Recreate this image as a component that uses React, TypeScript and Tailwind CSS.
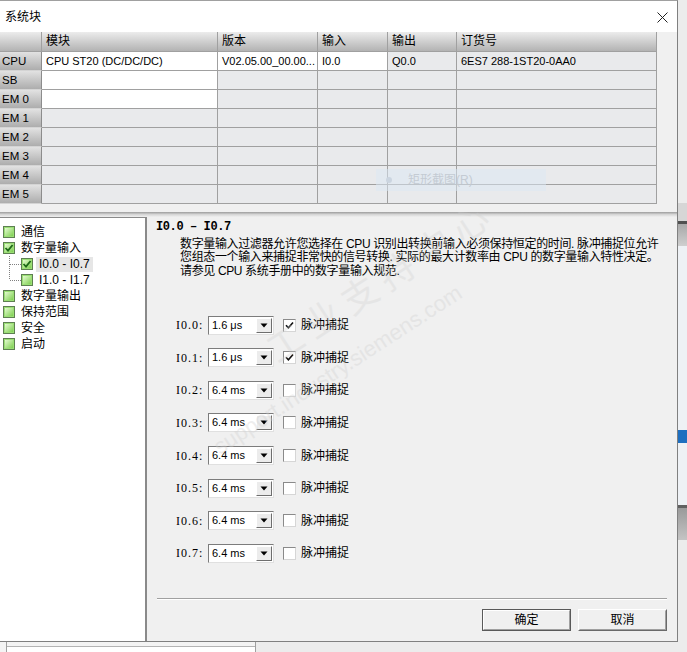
import React from "react";

const SANS = "font-['Liberation_Sans','Noto_Sans_CJK_SC',sans-serif]";

type Row = { h: string; cells: string[]; white: boolean[] };

const rows: Row[] = [
  { h: "CPU", cells: ["CPU ST20 (DC/DC/DC)", "V02.05.00_00.00...", "I0.0", "Q0.0", "6ES7 288-1ST20-0AA0"], white: [true, true, true, false, false] },
  { h: "SB", cells: ["", "", "", "", ""], white: [true, false, false, false, false] },
  { h: "EM 0", cells: ["", "", "", "", ""], white: [true, false, false, false, false] },
  { h: "EM 1", cells: ["", "", "", "", ""], white: [false, false, false, false, false] },
  { h: "EM 2", cells: ["", "", "", "", ""], white: [false, false, false, false, false] },
  { h: "EM 3", cells: ["", "", "", "", ""], white: [false, false, false, false, false] },
  { h: "EM 4", cells: ["", "", "", "", ""], white: [false, false, false, false, false] },
  { h: "EM 5", cells: ["", "", "", "", ""], white: [false, false, false, false, false] },
];

const headers = ["模块", "版本", "输入", "输出", "订货号"];

function TreeIcon({ checked }: { checked?: boolean }) {
  return (
    <svg width="12" height="12" viewBox="0 0 12 12" className="shrink-0">
      <defs>
        <linearGradient id="tg" x1="0" y1="0" x2="1" y2="1">
          <stop offset="0" stopColor="#e4fbd0" />
          <stop offset="1" stopColor="#7fcf52" />
        </linearGradient>
      </defs>
      <rect x="0.5" y="0.5" width="11" height="11" fill="#9adf74" stroke="#5e7f52" />
      <rect x="2" y="2" width="8" height="8" fill="url(#tg)" />
      {checked && (
        <path d="M2.5 6 L5 8.6 L9.6 3" fill="none" stroke="#1d6a17" strokeWidth="1.8" />
      )}
    </svg>
  );
}

function Connector({ last }: { last?: boolean }) {
  return (
    <svg width="21" height="16" viewBox="0 0 21 16" className="shrink-0">
      <line x1="9.5" y1="0" x2="9.5" y2={last ? 8 : 16} stroke="#808080" strokeDasharray="1 1" />
      <line x1="10" y1="8.5" x2="21" y2="8.5" stroke="#808080" strokeDasharray="1 1" />
    </svg>
  );
}

function CheckBox({ checked }: { checked?: boolean }) {
  return (
    <div className="w-[13px] h-[13px] bg-white border border-t-[#8a8a8a] border-l-[#8a8a8a] border-r-[#d6d6d6] border-b-[#d6d6d6] flex items-center justify-center shrink-0">
      {checked && (
        <svg width="9" height="9" viewBox="0 0 9 9">
          <path d="M1 4.2 L3.4 6.8 L8 1.5" fill="none" stroke="#111" strokeWidth="1.6" />
        </svg>
      )}
    </div>
  );
}

function Combo({ value }: { value: string }) {
  return (
    <div className="w-[66px] h-[19px] bg-white border border-t-[#7c7c7c] border-l-[#7c7c7c] border-r-[#e0e0e0] border-b-[#e0e0e0] flex items-center shrink-0">
      <span className={`flex-1 pl-[3px] text-[11px] text-black leading-none ${SANS}`}>{value}</span>
      <div className="w-[16px] h-[15px] mr-[1px] bg-[#ececec] border border-t-white border-l-white border-r-[#6e6e6e] border-b-[#6e6e6e] flex items-center justify-center">
        <svg width="8" height="5" viewBox="0 0 8 5">
          <path d="M0.5 0.5 L7.5 0.5 L4 4.5 Z" fill="#000" />
        </svg>
      </div>
    </div>
  );
}

const ioRows = [
  { l: "I0.0:", v: "1.6 μs", c: true },
  { l: "I0.1:", v: "1.6 μs", c: true },
  { l: "I0.2:", v: "6.4 ms", c: false },
  { l: "I0.3:", v: "6.4 ms", c: false },
  { l: "I0.4:", v: "6.4 ms", c: false },
  { l: "I0.5:", v: "6.4 ms", c: false },
  { l: "I0.6:", v: "6.4 ms", c: false },
  { l: "I0.7:", v: "6.4 ms", c: false },
];

export default function App() {
  return (
    <div className={`relative w-[687px] h-[652px] overflow-hidden bg-[#f0f0f0] flex flex-col text-black ${SANS}`}>
      <div className="flex h-[642px]">
        {/* dialog */}
        <div className="w-[678px] h-full flex flex-col border-r border-b border-[#808080] border-t border-t-[#a0a0a0] bg-[#f0f0f0]">
          {/* title bar */}
          <div className="h-[31px] bg-white flex items-center justify-between pl-[5px] pr-[9px] shrink-0">
            <span className="text-[12px] pt-[1px]">系统块</span>
            <svg width="11" height="11" viewBox="0 0 11 11" className="mb-[-1px]">
              <path d="M0.5 0.5 L10.5 10.5 M10.5 0.5 L0.5 10.5" stroke="#222" strokeWidth="1" />
            </svg>
          </div>
          {/* table area */}
          <div className="h-[180px] shrink-0 flex bg-[#f0f0f0]">
            <div className="w-[657px] flex flex-col">
              <div className="grid grid-cols-[42px_176px_100px_70px_69px_200px] h-[20px]">
                <div className="bg-linear-to-b from-[#ececec] to-[#b3b3b3] border-r border-b border-[#a0a0a0]" />
                {headers.map((h) => (
                  <div key={h} className="bg-linear-to-b from-[#ececec] to-[#b3b3b3] border-r border-b border-[#a0a0a0] pl-[4px] text-[12px] leading-[19px]">
                    {h}
                  </div>
                ))}
              </div>
              {rows.map((r) => (
                <div key={r.h} className="grid grid-cols-[42px_176px_100px_70px_69px_200px] h-[19px]">
                  <div className="bg-linear-to-b from-[#e2e2e2] to-[#adadad] border-r border-r-[#8c8c8c] border-b border-b-[#d4d4d4] pl-[2px] text-[11.5px] leading-[18px]">
                    {r.h}
                  </div>
                  {r.cells.map((c, i) => (
                    <div
                      key={i}
                      className={`${r.white[i] ? "bg-white" : "bg-[#e9eaec]"} border-r border-b border-[#a0a0a0] pl-[4px] text-[11px] leading-[18px] whitespace-nowrap overflow-hidden`}
                    >
                      {c}
                    </div>
                  ))}
                </div>
              ))}
            </div>
            <div className="flex-1" />
          </div>
          {/* splitter */}
          <div className="h-[5px] shrink-0 bg-linear-to-b from-[#9c9c9c] via-[#d6d6d6] to-[#f0f0f0]" />
          {/* lower */}
          <div className="flex-1 flex min-h-0">
            {/* tree */}
            <div className="w-[147px] h-full bg-white border-t border-t-[#8a8a8a] border-r-2 border-r-[#8a8a8a] pt-[6px] text-[12px]">
              <div className="flex items-center h-[16px] pl-[3px] gap-[6px]"><TreeIcon /><span>通信</span></div>
              <div className="flex items-center h-[16px] pl-[3px] gap-[6px]"><TreeIcon checked /><span>数字量输入</span></div>
              <div className="flex items-center h-[16px]">
                <Connector />
                <TreeIcon checked />
                <span className="ml-[3px] px-[3px] bg-[#e6e6e6] leading-[15px]">I0.0 - I0.7</span>
              </div>
              <div className="flex items-center h-[16px]">
                <Connector last />
                <TreeIcon />
                <span className="ml-[6px] leading-[15px]">I1.0 - I1.7</span>
              </div>
              <div className="flex items-center h-[16px] pl-[3px] gap-[6px]"><TreeIcon /><span>数字量输出</span></div>
              <div className="flex items-center h-[16px] pl-[3px] gap-[6px]"><TreeIcon /><span>保持范围</span></div>
              <div className="flex items-center h-[16px] pl-[3px] gap-[6px]"><TreeIcon /><span>安全</span></div>
              <div className="flex items-center h-[16px] pl-[3px] gap-[6px]"><TreeIcon /><span>启动</span></div>
            </div>
            {/* right panel */}
            <div className="flex-1 flex flex-col bg-[#f0f0f0]">
              <div className="pl-[9px] pt-[2px] h-[16px] text-[12px] font-bold font-['Liberation_Mono',monospace] leading-[16px] whitespace-pre tracking-[-0.4px]">
                I0.0 – I0.7
              </div>
              <div className="pl-[33px] mt-[5px] text-[12px] leading-[13.3px] whitespace-nowrap tracking-[-0.36px]">
                <div>数字量输入过滤器允许您选择在 CPU 识别出转换前输入必须保持恒定的时间. 脉冲捕捉位允许</div>
                <div>您组态一个输入来捕捉非常快的信号转换. 实际的最大计数率由 CPU 的数字量输入特性决定。</div>
                <div>请参见 CPU 系统手册中的数字量输入规范.</div>
              </div>
              <div className="mt-[31px] flex flex-col">
                {ioRows.map((r) => (
                  <div key={r.l} className="h-[32.6px] flex items-center pl-[29px]">
                    <span className="w-[32px] text-[12px] tracking-[1px] font-['Liberation_Serif',serif]">{r.l}</span>
                    <Combo value={r.v} />
                    <div className="ml-[9px]"><CheckBox checked={r.c} /></div>
                    <span className="ml-[5px] text-[12px]">脉冲捕捉</span>
                  </div>
                ))}
              </div>
              <div className="flex-1" />
              <div className="mx-[10px] h-[2px] border-t border-t-[#a0a0a0] border-b border-b-white" />
              <div className="flex justify-end gap-[7px] mr-[10px] mt-[9px] mb-[10px]">
                <div className="w-[89px] h-[22px] border border-[#5a5a5a] bg-[#f0f0f0] flex">
                  <div className="flex-1 border border-t-white border-l-white border-r-[#a0a0a0] border-b-[#a0a0a0] flex items-center justify-center text-[12px]">确定</div>
                </div>
                <div className="w-[89px] h-[22px] border border-t-white border-l-white border-r-[#6a6a6a] border-b-[#6a6a6a] bg-[#f0f0f0] flex">
                  <div className="flex-1 border border-t-[#f0f0f0] border-l-[#f0f0f0] border-r-[#a0a0a0] border-b-[#a0a0a0] flex items-center justify-center text-[12px]">取消</div>
                </div>
              </div>
            </div>
          </div>
        </div>
        {/* right strip of background window */}
        <div className="w-[9px] h-full flex flex-col">
          <div className="h-[203px] bg-[#ececec]" />
          <div className="h-[18px] bg-[#d6d6d6]" />
          <div className="h-[3px] bg-[#505050]" />
          <div className="h-[22px] bg-linear-to-b from-[#a8a8a8] to-[#cfcfcf]" />
          <div className="h-[184px] bg-[#eef1f5]" />
          <div className="h-[13px] bg-[#1e6fc0]" />
          <div className="h-[62px] bg-[#eef1f5]" />
          <div className="h-[3px] bg-[#606060]" />
          <div className="h-[32px] bg-linear-to-b from-[#9a9a9a] to-[#c4c4c4]" />
          <div className="flex-1 bg-[#ececec]" />
        </div>
      </div>
      {/* bottom strip of background window */}
      <div className="flex-1 flex bg-[#f4f4f4]">
        <div className="w-[7px] border-r border-[#a0a0a0]" />
        <div className="w-[249px] border-r border-[#a0a0a0] flex flex-col">
          <div className="h-[5px] border-b border-[#b4b4b4]" />
          <div className="flex-1 bg-white" />
        </div>
        <div className="flex-1 bg-[#ececec]" />
      </div>

      {/* faint screenshot-tool ghost menu */}
      <div className="absolute left-[376px] top-[169px] w-[170px] h-[22px] bg-[#dce7f3]/50 flex items-center pointer-events-none">
        <span className="ml-[10px] w-[6px] h-[6px] rounded-full bg-[#cbd5e0]" />
        <span className="ml-[16px] text-[12px] text-[#c4cbd3]">矩形截图(R)</span>
      </div>

      {/* watermark */}
      <div className="absolute left-[190px] top-[345px] w-[320px] text-[22px] text-[#cfcfcf] opacity-35 -rotate-[33deg] pointer-events-none whitespace-nowrap font-['Liberation_Sans',sans-serif]">
        support.industry.siemens.com
      </div>
      <div className="absolute left-[250px] top-[255px] text-[36px] text-[#cfcfcf] opacity-30 -rotate-[33deg] pointer-events-none whitespace-nowrap tracking-[8px]">
        工业支持中心
      </div>
    </div>
  );
}
